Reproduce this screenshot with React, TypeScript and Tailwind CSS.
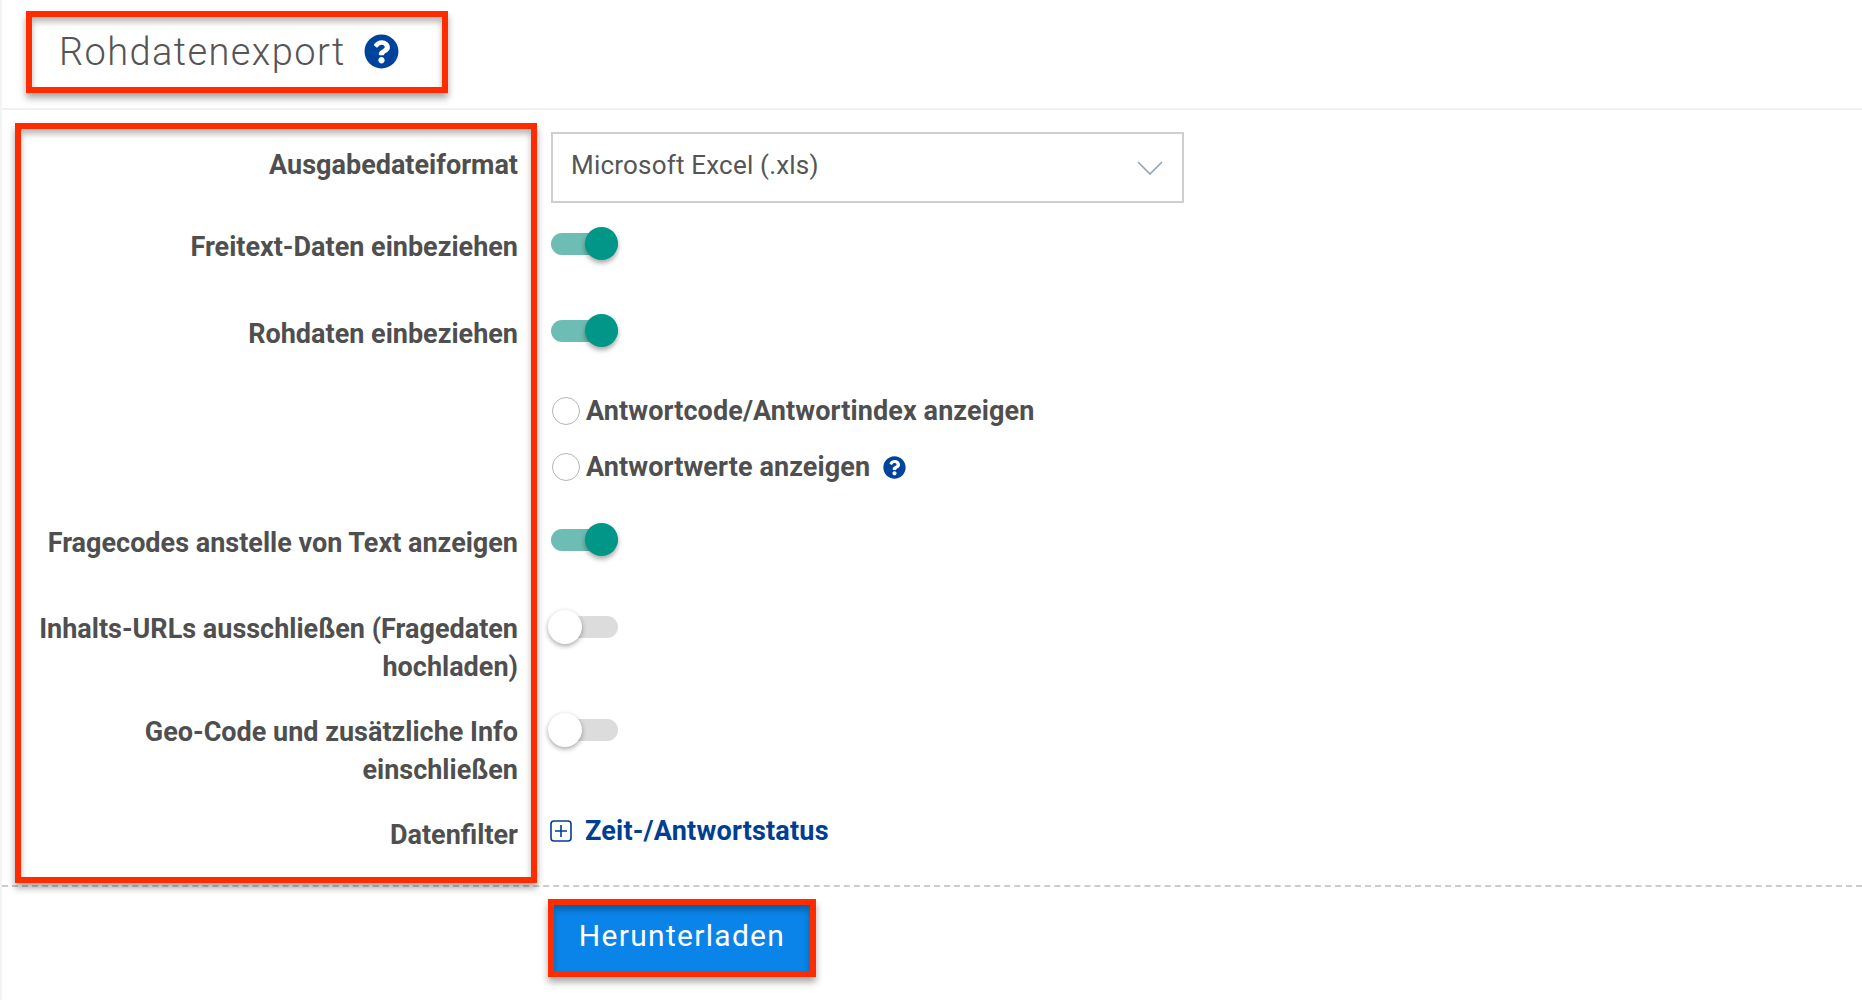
import React from "react";
import { FaQuestionCircle } from "react-icons/fa";

const font = "font-['Roboto',sans-serif]";

function Toggle({ on }: { on?: boolean }) {
  return (
    <div className={`relative flex h-[33px] w-[67px] items-center ${on ? "-mt-[1px]" : ""}`}>
      <div className={`h-[22px] w-full rounded-full ${on ? "bg-[#6dbdb4]" : "bg-[#dcdcdc]"}`} />
      {on ? (
        <div className="absolute top-0 right-0 size-[33px] rounded-full bg-[#009688] shadow-[0_3px_5px_rgba(0,0,0,0.35)]" />
      ) : (
        <div className="absolute top-0 -left-[3px] size-[34px] rounded-full bg-white shadow-[0_2px_5px_rgba(0,0,0,0.35)]" />
      )}
    </div>
  );
}

function Row({ label, className, children }: { label: React.ReactNode; className?: string; children?: React.ReactNode }) {
  return (
    <div className={`flex ${className ?? ""}`}>
      <div className="w-[518px] shrink-0 pl-[36px] text-right text-[27px] leading-[38px] font-bold text-[#4f4f4f]">{label}</div>
      <div className="ml-[33px] flex-1">{children}</div>
    </div>
  );
}

function Radio({ label, help }: { label: string; help?: boolean }) {
  return (
    <div className="flex h-[28px] items-center">
      <div className="ml-[1px] size-[28px] rounded-full border border-[#b5b5b5] bg-white" />
      <span className="ml-[6px] text-[27px] leading-[38px] font-bold tracking-[0.1px] text-[#4f4f4f]">{label}</span>
      {help && <FaQuestionCircle className="ml-[13px] size-[23px] text-[#00439c]" />}
    </div>
  );
}

const redBox =
  "pointer-events-none absolute border-[6px] border-[#ff2c00] shadow-[0_5px_7px_rgba(0,0,0,0.35),inset_0_5px_6px_rgba(0,0,0,0.28)]";

export default function App() {
  return (
    <div className={`relative h-[1000px] w-full overflow-hidden border-l-2 border-[#f3f3f6] bg-white ${font}`}>
      <header className="flex h-[110px] items-center border-b-2 border-[#f1f1f5] pb-[4px] pl-[57px]">
        <h1 className="text-[38px] leading-none font-light tracking-[1.4px] text-[#555555]">Rohdatenexport</h1>
        <FaQuestionCircle className="-mt-[2px] ml-[18px] size-[35px] text-[#00439c]" />
      </header>

      <main className="-ml-[2px] pt-[22px]">
        <Row label={<span className="mt-[14px] block">Ausgabedateiformat</span>} className="h-[96px]">
          <div className="flex h-[71px] w-[633px] items-center justify-between border-2 border-[#cfcfcf] pr-[19px] pl-[18px]">
            <span className="mb-[4px] text-[26px] tracking-[0.2px] text-[#555555]">Microsoft Excel (.xls)</span>
            <svg width="26" height="14" viewBox="0 0 26 14" fill="none" stroke="#8fa3bb" strokeWidth="1.6">
              <path d="M1 1l12 12L25 1" />
            </svg>
          </div>
        </Row>
        <Row label="Freitext-Daten einbeziehen" className="h-[87px]">
          <Toggle on />
        </Row>
        <Row label="Rohdaten einbeziehen" className="h-[209px]">
          <Toggle on />
          <div className="mt-[50px] flex flex-col gap-[28px]">
            <Radio label="Antwortcode/Antwortindex anzeigen" />
            <Radio label="Antwortwerte anzeigen" help />
          </div>
        </Row>
        <Row label="Fragecodes anstelle von Text anzeigen" className="h-[86px]">
          <Toggle on />
        </Row>
        <Row label="Inhalts-URLs ausschließen (Fragedaten hochladen)" className="h-[103px]">
          <Toggle />
        </Row>
        <Row label="Geo-Code und zusätzliche Info einschließen" className="h-[103px]">
          <Toggle />
        </Row>
        <Row label="Datenfilter" className="h-[69px]">
          <div className="-mt-[1px] -ml-[1px] flex h-[32px] items-center text-[27px] font-bold tracking-[0.2px] text-[#003e92]">
            <svg width="22" height="22" viewBox="0 0 22 22" fill="none" stroke="#003e92" strokeWidth="1.6">
              <rect x="1" y="1" width="20" height="20" rx="3" />
              <path d="M11 5v12M5 11h12" />
            </svg>
            <span className="ml-[13px]">Zeit-/Antwortstatus</span>
          </div>
        </Row>
      </main>

      <div className="border-t-2 border-dashed border-[#cccccc] pt-[18px] pl-[552px]">
        <button className="h-[66px] w-[256px] bg-[#0a84e8] pb-[6px] text-[30px] tracking-[1.3px] text-white">Herunterladen</button>
      </div>

      <div className={`${redBox} top-[11px] left-[24px] h-[82px] w-[422px]`} />
      <div className={`${redBox} top-[123px] left-[13px] h-[760px] w-[522px]`} />
      <div className={`${redBox} top-[899px] left-[546px] h-[78px] w-[268px]`} />
    </div>
  );
}
